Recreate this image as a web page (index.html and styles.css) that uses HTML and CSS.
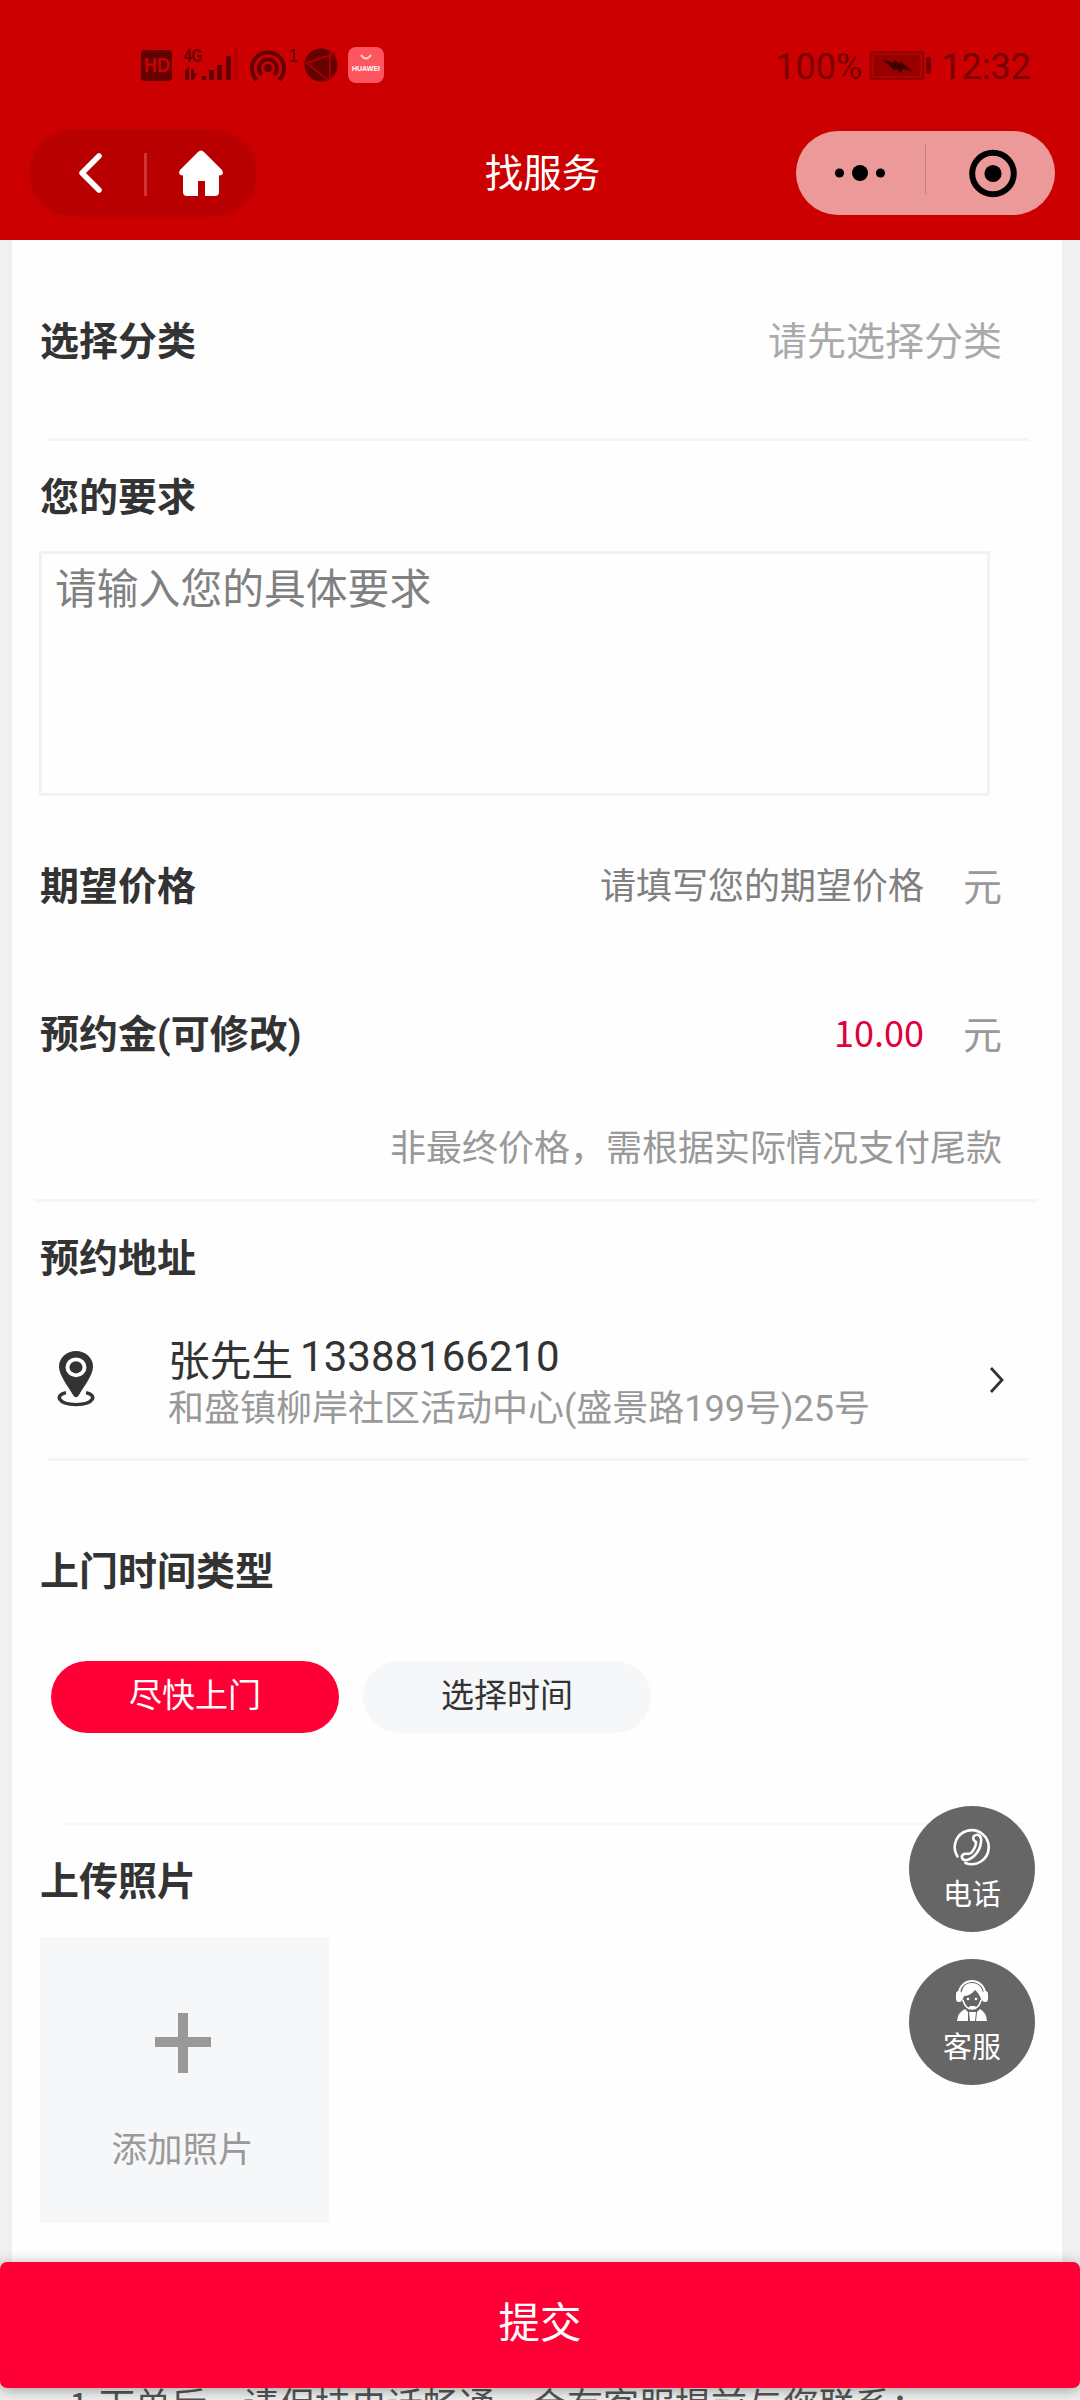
FILE: index.html
```html
<!DOCTYPE html>
<html lang="zh-CN">
<head>
<meta charset="utf-8">
<title>找服务</title>
<link rel="stylesheet" href="styles.css">
</head>
<body>
<div class="screen">
  <header class="header">
    <div class="status">
      <svg class="status-icons" width="250" height="44" viewBox="0 0 250 44">
        <rect x="1" y="7" width="31" height="31" rx="4" fill="#650000"/>
        <text class="hd" x="4" y="29" textLength="26" lengthAdjust="spacingAndGlyphs">HD</text>
        <text class="net" x="44" y="19" textLength="18" lengthAdjust="spacingAndGlyphs">4G</text>
        <g fill="#650000">
          <path d="M44 29l5-6v14h-4v-9zM51 26h3v5l4-1-5 7h-2z"/>
          <path d="M62 33h4v4h-4zM69 27h5v10h-5zM77 22h5v15h-5zM86 13h5v24h-5z"/>
          <path d="M94 6h4v31h-4z" opacity=".2"/>
          <circle cx="128" cy="25" r="4"/>
        </g>
        <g fill="none" stroke="#650000" stroke-width="4">
          <path d="M117 37a16 16 0 1 1 22 0"/>
          <path d="M122 32a9 9 0 1 1 12 0"/>
        </g>
        <text class="net small-one" x="148" y="19">1</text>
        <circle cx="181" cy="22" r="16.500" fill="#650000"/>
        <path d="M164 21l32-11M168 21l21 17M190 7l0 30" stroke="#a80000" stroke-width="2" fill="none"/>
        <rect x="208" y="4" width="36" height="36" rx="8" fill="#ff5560"/>
        <path d="M221 12q5 7 10 0" fill="none" stroke="#ffd9c0" stroke-width="2"/>
        <text class="hw" x="212" y="28" textLength="28" lengthAdjust="spacingAndGlyphs">HUAWEI</text>
      </svg>
      <div class="status-right">
        <span>100%</span>
        <svg width="64" height="32" viewBox="0 0 64 32">
          <rect x="1.500" y="2" width="53" height="27" rx="2" fill="#b00000" stroke="#850000" stroke-width="1.500"/>
          <rect x="6" y="6" width="44" height="19" fill="#980000" stroke="#850000"/>
          <path d="M13 9l12 4 0-3 6 4 0-3 12 10-10-2v4l-7-5v3z" fill="#400000"/>
          <path d="M57 7h3q2 0 2 2v13q0 2-2 2h-3z" fill="#7a0000"/>
        </svg>
        <span>12:32</span>
      </div>
    </div>
    <div class="navbar">
      <div class="nav-pill">
        <svg width="226" height="86" viewBox="0 0 226 86">
          <path d="M69 26L52 43 69 60" fill="none" stroke="#fff" stroke-width="5.500" stroke-linecap="round" stroke-linejoin="round"/>
          <path d="M115.500 23v43" stroke="#cf3434" stroke-width="3"/>
          <path d="M168 22q3-3 6 0l18 18q3 5-3 5.500V62q0 4-4 4H175V51h-7v15h-11q-4 0-4-4V45.500q-6-.5-3-5.500z" fill="#fff"/>
        </svg>
      </div>
      <h1 class="nav-title">找服务</h1>
      <div class="capsule">
        <svg width="259" height="84" viewBox="0 0 259 84">
          <circle cx="43.500" cy="42" r="4.600"/><circle cx="64" cy="42" r="8"/><circle cx="84.500" cy="42" r="4.600"/>
          <path d="M129.500 13v50" stroke="#cf7e7e" stroke-width="1"/>
          <circle cx="197" cy="42.500" r="20.800" fill="none" stroke="#000" stroke-width="6"/>
          <circle cx="197" cy="42.500" r="8.600"/>
        </svg>
      </div>
    </div>
  </header>

  <main class="card">
    <section class="row row-category">
      <h2>选择分类</h2>
      <span class="hint-light">请先选择分类</span>
    </section>
    <div class="line"></div>
    <h2 class="block-title">您的要求</h2>
    <div class="textarea">请输入您的具体要求</div>
    <section class="row row-price">
      <h2>期望价格</h2>
      <span class="value">请填写您的期望价格</span>
      <span class="unit">元</span>
    </section>
    <section class="row row-deposit">
      <h2>预约金(可修改)</h2>
      <span class="value amount">10.00</span>
      <span class="unit">元</span>
    </section>
    <p class="note">非最终价格，需根据实际情况支付尾款</p>
    <div class="line line-wide"></div>
    <h2 class="block-title">预约地址</h2>
    <section class="address">
      <svg class="pin" width="40" height="58" viewBox="0 0 40 62" preserveAspectRatio="none">
        <path fill-rule="evenodd" d="M20 1a17 17 0 0 1 17 17c0 9-9 21-14 30q-3 5-6 0C12 39 3 27 3 18A17 17 0 0 1 20 1zm0 7a10.500 10.500 0 1 0 0 21 10.500 10.500 0 0 0 0-21z" fill="#333"/>
        <circle cx="20" cy="18.500" r="6.500" fill="#333"/>
        <path d="M10 45.500C-1 48 1 58 20 58.500 39 58 41 48 30 45.500" fill="none" stroke="#333" stroke-width="3.500"/>
      </svg>
      <div class="address-text">
        <div class="person"><span>张先生</span><span class="phone">13388166210</span></div>
        <div class="place">和盛镇柳岸社区活动中心(盛景路199号)25号</div>
      </div>
      <svg class="arrow" width="18" height="30" viewBox="0 0 18 30">
        <path d="M3 3l11 12L3 27" fill="none" stroke="#333" stroke-width="2.800"/>
      </svg>
    </section>
    <div class="line"></div>
    <h2 class="block-title time-title">上门时间类型</h2>
    <div class="pills">
      <span class="pill pill-active">尽快上门</span>
      <span class="pill">选择时间</span>
    </div>
    <div class="line line-faint"></div>
    <h2 class="block-title upload-title">上传照片</h2>
    <div class="upload">
      <svg width="56" height="60" viewBox="0 0 56 60"><path d="M23 0h10v24h23v10H33v26H23V34H0V24h23z" fill="#999"/></svg>
      <span>添加照片</span>
    </div>
  </main>

  <p class="tips">1.下单后，请保持电话畅通，会有客服提前与您联系：</p>
  <div class="submit">提交</div>

  <aside class="floats">
    <div class="float">
      <svg width="40" height="40" viewBox="0 0 40 40" fill="none" stroke="#fff" stroke-width="2.600" stroke-linecap="round" stroke-linejoin="round">
        <path d="M5.500 29.500A17 17 0 1 1 13.500 36"/>
        <path d="M22 9c4-3 8 0 7 6-1 9-7 16-14 18-5 1-7-4-3-6 3-1 4 1 7-1 3-3 5-7 5-11-2-1-4-4-2-6z"/>
      </svg>
      <span>电话</span>
    </div>
    <div class="float">
      <svg width="40" height="44" viewBox="0 0 40 44">
        <path d="M7 16a13 13 0 0 1 26 0" fill="none" stroke="#fff" stroke-width="2"/>
        <path d="M20 5c7 0 11 5 11 12l-1 7q-2-8-7-12-5 6-11 6-2 4-2 7-3-20 10-20z" fill="#fff"/>
        <rect x="4" y="13" width="6" height="11" rx="3" fill="#fff"/>
        <rect x="30" y="13" width="6" height="11" rx="3" fill="#fff"/>
        <path d="M11 22q2 9 9 9t9-9" fill="none" stroke="#fff" stroke-width="1.500"/>
        <circle cx="16" cy="21" r="1.300" fill="#fff"/><circle cx="24" cy="21" r="1.300" fill="#fff"/>
        <rect x="17" y="28" width="7" height="3" rx="1.500" fill="#fff"/>
        <path d="M5 43q1-9 8-12l3 3v9zM17 34h7l-1 9h-5zM25 34l3-3q6 3 7 12H24z" fill="#fff"/>
      </svg>
      <span>客服</span>
    </div>
  </aside>
</div>
</body>
</html>
```

FILE: styles.css
```css
* {
  box-sizing: border-box;
}

body {
  margin: 0;
  background: #f0f0f0;
  font-family: "Noto Sans CJK SC", sans-serif;
  color: #333;
}

h1,
h2,
p {
  margin: 0;
  font-weight: 400;
}

svg {
  display: block;
  flex: none;
}

.screen {
  position: relative;
  width: 1080px;
  height: 2400px;
  overflow: hidden;
}

/* Header */
.header {
  height: 240px;
  background: #c00;
}

.status {
  display: flex;
  justify-content: space-between;
  height: 130px;
  padding: 43px 49px 0 140px;
}

.status-right {
  display: flex;
  align-items: center;
  height: 48px;
  font: 36px/48px Roboto, sans-serif;
  color: #780000;
}

.status-right svg {
  margin: -2px 8px 0 7px;
}

.hd {
  font: bold 20px "Liberation Sans", sans-serif;
  fill: #c00;
}

.net {
  font: bold 19px "Liberation Sans", sans-serif;
  fill: #650000;
}

.small-one {
  font-weight: 400;
}

.hw {
  font: bold 8px "Liberation Sans", sans-serif;
  fill: #fff;
}

.navbar {
  display: grid;
  grid-template-columns: 396px 1fr 396px;
  align-items: center;
  height: 86px;
  padding: 0 25px 0 30px;
}

.nav-pill {
  width: 226px;
  height: 86px;
  border-radius: 43px;
  background: #b90000;
  box-shadow: 0 0 5px #b90000;
}

.nav-title {
  height: 86px;
  text-align: center;
  font-size: 38.500px;
  line-height: 80px;
  color: #fff;
}

.capsule {
  justify-self: end;
  width: 259px;
  height: 84px;
  border-radius: 42px;
  background: #ec9999;
}

/* Form card */
.card {
  height: 2040px;
  margin: 0 18px 0 12px;
  padding: 0 60px 0 28px;
  background: #fefefe;
}

.row {
  display: flex;
  align-items: center;
}

h2 {
  font-family: Roboto, "Noto Sans CJK SC", sans-serif;
  font-size: 39px;
  font-weight: 700;
  color: #333;
}

.row h2 {
  flex: 1;
}

.row-category {
  height: 198px;
  padding-bottom: 3px;
}

.hint-light {
  font-size: 39px;
  color: #aaa;
}

.line {
  height: 3px;
  margin: 0 -27px 0 8px;
  background: #f5f5f5;
}

.line-wide {
  margin: 0 -36px 0 -6px;
}

.line-faint {
  height: 2px;
  margin-left: 24px;
  background: #f8f8f8;
}

.block-title {
  height: 110px;
  line-height: 114px;
}

.textarea {
  height: 245px;
  margin: 0 12px 0 -1px;
  padding: 2px 13px;
  border: 3px solid #f2f2f2;
  font-size: 41.800px;
  line-height: 60px;
  color: #808080;
}

.row-price {
  height: 178px;
  padding-bottom: 4px;
}

.row-deposit {
  height: 118px;
  padding-bottom: 4px;
}

.value {
  font-size: 36px;
  color: #808080;
}

.amount {
  color: #e0003c;
}

.unit {
  margin-left: 39px;
  padding-top: 2px;
  font-size: 39px;
  color: #999;
}

.note {
  height: 107px;
  text-align: right;
  font-size: 36px;
  line-height: 106px;
  color: #999;
}

.address {
  display: flex;
  align-items: flex-start;
  height: 146px;
}

.pin {
  margin: 38px 0 0 16px;
}

.address-text {
  flex: 1;
  margin: 16px 0 0 72px;
}

.person {
  display: flex;
  height: 60px;
  font-size: 41.700px;
  line-height: 60px;
}

.phone {
  margin: -1px 0 0 7px;
  font-family: Roboto, sans-serif;
  font-size: 42px;
}

.place {
  margin-top: -4px;
  font: 36px/50px Roboto, "Noto Sans CJK SC", sans-serif;
  color: #999;
  white-space: nowrap;
}

.arrow {
  margin: 53px -4px 0 0;
}

.time-title {
  height: 200px;
  padding-top: 54px;
}

.pills {
  display: flex;
  gap: 24px;
  height: 162px;
  padding-left: 11px;
}

.pill {
  width: 288px;
  height: 72px;
  border-radius: 36px;
  background: #f6f7f9;
  text-align: center;
  font-size: 33px;
  line-height: 65px;
}

.pill-active {
  background: #ff0036;
  color: #fff;
}

.upload-title {
  height: 112px;
}

.upload {
  display: flex;
  flex-direction: column;
  align-items: center;
  width: 289px;
  height: 286px;
  padding: 76px 4px 0 0;
  border-radius: 4px;
  background: #f6f7f9;
  font-size: 35.500px;
  line-height: 50px;
  color: #999;
}

.upload span {
  margin-top: 49px;
}

/* Bottom area */
.tips {
  margin: 97px 0 0 69px;
  font-size: 36px;
  line-height: 52px;
  color: #555;
  white-space: nowrap;
}

.submit {
  position: absolute;
  left: 0;
  right: 0;
  bottom: 12px;
  height: 126px;
  border-radius: 7px;
  background: #ff0036;
  box-shadow: 0 2px 14px rgba(0, 0, 0, .35);
  text-align: center;
  font-size: 41.500px;
  line-height: 117px;
  color: #fff;
}

.floats {
  position: absolute;
  top: 1806px;
  right: 45px;
  display: flex;
  flex-direction: column;
  gap: 27px;
}

.float {
  display: flex;
  flex-direction: column;
  align-items: center;
  width: 126px;
  height: 126px;
  padding-top: 21px;
  border-radius: 50%;
  background: #666;
  font-size: 29px;
  line-height: 40px;
  color: #fff;
}

.float span {
  margin-top: 5px;
}

.float + .float {
  padding-top: 19px;
}

.float + .float span {
  margin-top: 3px;
}
```
